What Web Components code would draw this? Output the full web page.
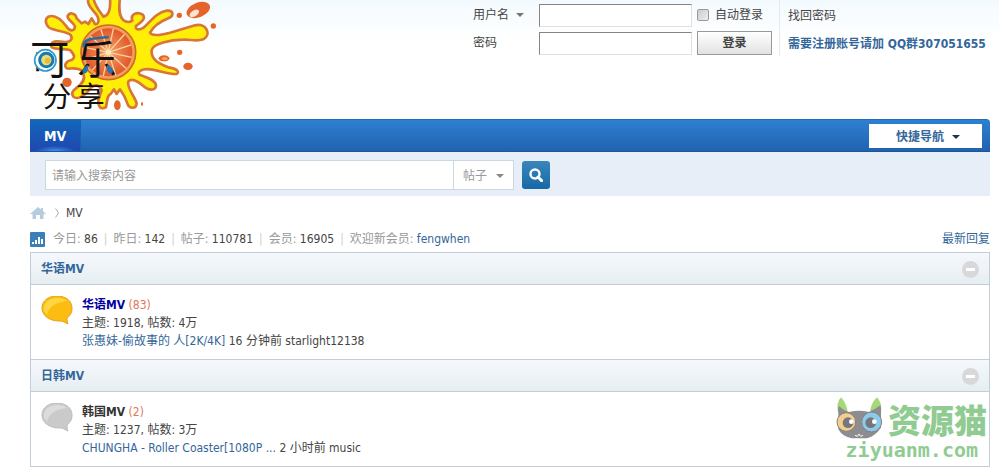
<!DOCTYPE html>
<html lang="zh-CN">
<head>
<meta charset="utf-8">
<title>MV</title>
<style>
	body {
		margin: 0;
		padding: 0 9px 0 30px;
		background: linear-gradient(#f3fafe, #fff 40px) no-repeat #fff;
		color: #444;
		font: 12px/18px "DejaVu Sans Condensed", "Noto Sans CJK SC", sans-serif;
	}
</style>
</head>
<body>
<forum-page>
	<forum-header slot="header"></forum-header>
	<forum-nav slot="header" label="MV"></forum-nav>
	<forum-search slot="header"></forum-search>
	<forum-crumbs>MV</forum-crumbs>
	<forum-stats></forum-stats>
	<forum-list>
		<forum-category name="华语MV">
			<forum-item name="华语MV" today="83" threads="1918" posts="4万" fresh>
				<a slot="last" href="#">张惠妹-偷故事的 人[2K/4K]</a>
				<span slot="when">16 分钟前 starlight12138</span>
			</forum-item>
		</forum-category>
		<forum-category name="日韩MV">
			<forum-item name="韩国MV" today="2" threads="1237" posts="3万">
				<a slot="last" href="#">CHUNGHA - Roller Coaster[1080P ...</a>
				<span slot="when">2 小时前 music</span>
			</forum-item>
		</forum-category>
	</forum-list>
	<site-mark slot="mark"></site-mark>
</forum-page>

<script>
class ForumElement extends HTMLElement {
	constructor() {
		super();
		this.attachShadow({ mode: "open" });
		this.shadowRoot.innerHTML = this.render();
	}

	render() {
		return "<slot></slot>";
	}
}

class ForumPage extends ForumElement {
	render() {
		return `
			<style>
				:host { display: block; position: relative; }
				main { display: block; }
				::slotted(site-mark) { position: absolute; right: 3px; bottom: 8px; }
			</style>
			<header><slot name="header"></slot></header>
			<main><slot></slot></main>
			<slot name="mark"></slot>
		`;
	}
}

class ForumLogo extends ForumElement {
	render() {
		let cuts = "";
		for (let i = 0; i < 12; i++) {
			cuts += `<path d="M0 0V-72" transform="rotate(${i * 30 + 12})"/>`;
		}
		return `
			<style>
				:host { display: block; }
				svg { display: block; width: 200px; height: 119px; }
				text { font-family: "Noto Sans CJK SC", sans-serif; fill: #111; }
			</style>
			<svg viewBox="30 0 600 357" role="img" aria-label="可乐分享">
				<defs>
					<radialGradient id="pulp">
						<stop offset="0" stop-color="#f6a467"/>
						<stop offset="1" stop-color="#e2562a"/>
					</radialGradient>
				</defs>
				<path fill="#ffee05" stroke="#d87538" stroke-width="8" stroke-linejoin="round" d="M300-8C296 25 296 50 312 62Q325 70 337 62C330 42 352 34 368 44C380 58 360 68 348 78C345 92 360 90 372 82C395 60 410 38 440 32C462 30 462 48 445 55C420 65 400 80 390 98C395 108 420 106 450 98L525 76C560 68 575 105 550 118C530 125 510 118 490 119C450 120 400 130 395 150C392 180 420 192 445 202C470 205 480 215 470 222C445 223 420 212 390 208C365 205 350 215 360 225C380 232 405 240 408 255C408 272 390 272 375 262C355 245 335 232 325 245C320 265 345 290 350 310C348 330 325 325 322 310C315 290 305 275 300 268L290 282L282 268L272 282C262 285 262 300 258 322C240 330 235 320 235 300L245 270C235 250 220 255 210 265C195 290 170 300 160 290C150 275 165 268 180 255C195 240 195 225 185 212C170 200 150 208 140 205C130 195 140 182 155 180C165 175 165 165 150 150C130 145 105 150 95 142C90 128 100 122 120 125C150 130 160 120 152 105C140 95 120 95 100 88C80 85 70 60 85 50C105 42 125 60 140 80C150 95 163 95 165 80C160 65 140 60 143 48C150 35 168 40 170 55L185 70L195 65L205 72L215 55L225 72C235 75 240 60 230 45C215 25 200 15 205-8L220-8C222 15 240 35 250 50C268 48 272 20 270-8Z"/>
				<g fill="#e5642c">
					<ellipse cx="535" cy="30" rx="37" ry="22" transform="rotate(-22 535 30)"/>
					<circle cx="478" cy="46" r="8"/>
					<circle cx="580" cy="78" r="8"/>
					<circle cx="479" cy="157" r="8"/>
					<ellipse cx="432" cy="175" rx="16" ry="9"/>
					<ellipse cx="504" cy="199" rx="14" ry="11"/>
					<circle cx="141" cy="247" r="14"/>
					<ellipse cx="292" cy="316" rx="10" ry="15"/>
					<ellipse cx="366" cy="312" rx="3" ry="6"/>
				</g>
				<ellipse cx="523" cy="40" rx="16" ry="9" fill="#fbe3d2" transform="rotate(-35 523 40)"/>
				<ellipse cx="434" cy="176" rx="9" ry="4" fill="#f7a94f"/>
				<circle cx="265" cy="157" r="82" fill="#f0a05a" stroke="#cf6a25" stroke-width="5"/>
				<circle cx="265" cy="157" r="72" fill="url(#pulp)"/>
				<g transform="translate(265 157)" stroke="#f9d6a2" stroke-width="4">${cuts}</g>
				<circle cx="265" cy="157" r="8" fill="#fbe7b8"/>
				<g font-size="118">
					<text x="30" y="222">可</text>
					<text x="172" y="222">乐</text>
				</g>
				<g font-size="86">
					<text x="68" y="321">分</text>
					<text x="168" y="321">享</text>
				</g>
				<g fill="none">
					<circle cx="76" cy="181" r="32" fill="#fff" stroke="#2e9ccc" stroke-width="5"/>
					<circle cx="79" cy="180" r="20" fill="#e3e27a" stroke="#1979b2" stroke-width="9"/>
					<circle cx="83" cy="182" r="9" fill="#e9b83d"/>
				</g>
				<path d="M191 142C190 120 200 116 266 111" fill="none" stroke="#286c9e" stroke-width="8"/>
				<path d="M204 194C190 203 183 212 190 220C203 222 205 210 204 194ZM262 194C278 203 282 212 276 220C262 222 258 210 262 194Z" fill="#2176b3"/>
			</svg>
		`;
	}
}

class LoginForm extends ForumElement {
	render() {
		return `
			<style>
				:host { display: block; }
				form {
					display: grid;
					grid-template-columns: 61px 153px 75px;
					grid-template-rows: 24px 24px;
					gap: 4px 5px;
					align-items: center;
					padding-top: 3px;
				}
				.kind { display: flex; align-items: center; gap: 6px; }
				.kind::after {
					content: "";
					border: 4px solid transparent;
					border-top-color: #777;
					border-bottom: 0;
				}
				select {
					appearance: none;
					border: 0;
					padding: 0;
					background: none;
					font: inherit;
					color: inherit;
				}
				input[type=text], input[type=password] {
					box-sizing: border-box;
					width: 100%;
					height: 23px;
					margin: 0;
					border: 1px solid;
					border-color: #848484 #e0e0e0 #e0e0e0 #848484;
					background: #fff;
				}
				.auto { display: flex; align-items: center; gap: 6px; white-space: nowrap; }
				input[type=checkbox] {
					appearance: none;
					box-sizing: border-box;
					width: 12px;
					height: 12px;
					margin: 0;
					border: 1px solid #999;
					border-radius: 2px;
					background: linear-gradient(135deg, #ccc, #eee);
				}
				button {
					height: 24px;
					padding: 0;
					border: 1px solid #999;
					background: linear-gradient(#fff, #e2e2e2);
					font: inherit;
					font-weight: bold;
					color: #444;
				}
			</style>
			<form>
				<span class="kind"><select aria-label="登录方式"><option>用户名</option></select></span>
				<input type="text" aria-label="用户名">
				<label class="auto"><input type="checkbox">自动登录</label>
				<label for="pw">密码</label>
				<input type="password" id="pw">
				<button type="button">登录</button>
			</form>
		`;
	}
}

class ForumHeader extends ForumElement {
	render() {
		return `
			<style>
				:host { display: flex; align-items: flex-start; height: 119px; }
				login-form { margin-left: auto; }
				nav {
					display: grid;
					grid-template-rows: 24px 24px;
					gap: 4px;
					align-items: center;
					box-sizing: border-box;
					width: 211px;
					margin-left: 7px;
					padding: 4px 0 0 8px;
					border-left: 1px solid #e4eaf0;
					white-space: nowrap;
				}
				a { color: #444; text-decoration: none; }
				a.join { color: #369; font-weight: bold; }
			</style>
			<forum-logo></forum-logo>
			<login-form></login-form>
			<nav>
				<a href="#">找回密码</a>
				<a href="#" class="join">需要注册账号请加 QQ群307051655</a>
			</nav>
		`;
	}
}

class ForumNav extends ForumElement {
	render() {
		return `
			<style>
				:host {
					display: flex;
					justify-content: space-between;
					align-items: center;
					box-sizing: border-box;
					height: 33px;
					padding-right: 8px;
					border-top: 1px solid #226db0;
					border-bottom: 1px solid #1d5596;
					border-radius: 0 4px 0 0;
					background: linear-gradient(#2e80d2, #2062b0);
				}
				a {
					align-self: stretch;
					padding: 0 14px;
					border-right: 1px solid #1c5fae;
					background:
						radial-gradient(ellipse 20px 5px at 50% 100%, #3d92e8, transparent),
						linear-gradient(#1267bb, #2047b0);
					font-size: 14px;
					font-weight: bold;
					line-height: 32px;
					color: #fff;
					text-decoration: none;
				}
				button {
					display: flex;
					justify-content: center;
					align-items: center;
					gap: 8px;
					width: 113px;
					height: 24px;
					padding: 2px 0 0 5px;
					border: 0;
					background: #fff;
					font: inherit;
					font-weight: bold;
					color: #369;
				}
				button::after {
					content: "";
					border: 4px solid transparent;
					border-top-color: #234;
					border-bottom: 0;
				}
			</style>
			<a href="#"></a>
			<button type="button">快捷导航</button>
		`;
	}

	connectedCallback() {
		this.shadowRoot.querySelector("a").textContent = this.getAttribute("label");
	}
}

class ForumSearch extends ForumElement {
	render() {
		return `
			<style>
				:host { display: block; padding: 8px 15px 6px; background: #e8eef7; }
				form { display: flex; align-items: center; height: 30px; }
				input {
					flex: 0 1 409px;
					min-width: 0;
					box-sizing: border-box;
					height: 30px;
					padding: 2px 6px 0;
					border: 1px solid #ccd7e2;
					background: #fff;
					font: inherit;
				}
				input::placeholder { color: #999; opacity: 1; }
				.kind {
					display: flex;
					align-items: center;
					justify-content: center;
					gap: 8px;
					box-sizing: border-box;
					width: 60px;
					height: 30px;
					padding-top: 2px;
					border: 1px solid #ccd7e2;
					border-left: 0;
					background: #fff;
				}
				.kind::after {
					content: "";
					border: 4px solid transparent;
					border-top-color: #888;
					border-bottom: 0;
				}
				select {
					appearance: none;
					padding: 0;
					border: 0;
					background: none;
					font: inherit;
					color: #999;
				}
				button {
					display: grid;
					place-items: center;
					width: 28px;
					height: 28px;
					margin-left: 8px;
					padding: 0;
					border: 0;
					border-radius: 3px;
					background: linear-gradient(#3a86bc, #1669a6);
				}
			</style>
			<form>
				<input type="text" placeholder="请输入搜索内容" aria-label="搜索">
				<span class="kind"><select aria-label="搜索类型"><option>帖子</option></select></span>
				<button type="button" aria-label="搜索">
					<svg width="14" height="14" viewBox="0 0 14 14" fill="none" stroke="#fff">
						<circle cx="6" cy="6" r="4.5" stroke-width="2.4"/>
						<path d="M9 9l3.600 3.600" stroke-width="3" stroke-linecap="round"/>
					</svg>
				</button>
			</form>
		`;
	}
}

class ForumCrumbs extends ForumElement {
	render() {
		return `
			<style>
				:host { display: flex; align-items: center; height: 34px; color: #444; }
				a { display: flex; }
				.sep { margin: 0 7px 0 9px; }
			</style>
			<a href="#" aria-label="首页">
				<svg width="16" height="14" viewBox="0 0 16 14" fill="#b7cbdf">
					<path d="M8 1L0 8h2.500v5H6V9h4v4h3.500V8H16l-3-3V2h-2v1.500z"/>
				</svg>
			</a>
			<svg class="sep" width="4" height="10" viewBox="0 0 4 10" fill="none" stroke="#aaa">
				<path d="M.5.5L3.500 5L.5 9.500"/>
			</svg>
			<slot></slot>
		`;
	}
}

class ForumStats extends ForumElement {
	render() {
		return `
			<style>
				:host { display: flex; align-items: center; height: 18px; padding-bottom: 4px; color: #999; }
				svg { margin-right: 8px; }
				em { font-style: normal; color: #444; }
				i { margin: 0 6px; font-style: normal; color: #ccc; }
				a { color: #369; text-decoration: none; }
				.latest { margin-left: auto; }
			</style>
			<svg width="15" height="15" viewBox="0 0 15 15">
				<rect width="15" height="15" rx="1" fill="#3b7fb8"/>
				<path d="M2 10h2v2H2zM5 8h2v4H5zM8 5h2v7H8zM11 7h2v5h-2z" fill="#fff"/>
			</svg>
			<span>今日: <em>86</em></span><i>|</i>
			<span>昨日: <em>142</em></span><i>|</i>
			<span>帖子: <em>110781</em></span><i>|</i>
			<span>会员: <em>16905</em></span><i>|</i>
			<span>欢迎新会员: <a href="#">fengwhen</a></span>
			<a href="#" class="latest">最新回复</a>
		`;
	}
}

class ForumList extends ForumElement {
	render() {
		return `
			<style>
				:host { display: block; border: 1px solid #c2cdd8; border-top: 0; }
			</style>
			<slot></slot>
		`;
	}
}

class ForumCategory extends ForumElement {
	render() {
		return `
			<style>
				:host { display: block; }
				header {
					display: flex;
					justify-content: space-between;
					align-items: center;
					height: 31px;
					padding: 0 10px;
					border: solid #c2cdd8;
					border-width: 1px 0;
					background: linear-gradient(#f5f8fc, #e6eef2);
				}
				h2 { margin: 0; font-size: 12px; }
				a { color: #369; text-decoration: none; }
				button { display: flex; padding: 2px 0 0; border: 0; background: none; }
			</style>
			<header>
				<h2><a href="#"></a></h2>
				<button type="button" aria-label="收起">
					<svg width="17" height="17" viewBox="0 0 17 17">
						<circle cx="8.500" cy="8.500" r="8.500" fill="#d8d8da"/>
						<path d="M4 7h9v3H4z" fill="#fff"/>
					</svg>
				</button>
			</header>
			<slot></slot>
		`;
	}

	connectedCallback() {
		this.shadowRoot.querySelector("a").textContent = this.getAttribute("name");
	}
}

class ForumItem extends ForumElement {
	render() {
		return `
			<style>
				:host {
					--bubble: #cacaca;
					--bubble-light: #dcdcdc;
					--bubble-edge: #bdbdbd;
					display: flex;
					gap: 9px;
					padding: 11px 10px 9px;
					background: #fff;
				}
				:host([fresh]) {
					--bubble: #fdbc12;
					--bubble-light: #ffd640;
					--bubble-edge: #e3a216;
				}
				h3 { display: inline; margin: 0; font-size: 12px; }
				h3 a { color: #333; text-decoration: none; }
				:host([fresh]) h3 a { color: #0000a0; }
				em { font-style: normal; color: #e0785a; }
				::slotted(a) { color: #369; text-decoration: none; }
			</style>
			<svg width="32" height="31" viewBox="0 0 32 31">
				<path d="M16 0C7 0 1 5 1 12C1 20 9 25 18 25C20 25 22 25 23 26L27 28C26 26 26 24 26 22C30 19 31 16 31 12C31 5 25 0 16 0Z" fill="var(--bubble)" stroke="var(--bubble-edge)"/>
				<path d="M3 15C2 7 8 2 16 2C20 2 24 3 26 5C17 6 8 9 6 19Z" fill="var(--bubble-light)"/>
			</svg>
			<div>
				<div><h3><a href="#"></a></h3> <em></em></div>
				<div class="count"></div>
				<div><slot name="last"></slot> <slot name="when"></slot></div>
			</div>
		`;
	}

	connectedCallback() {
		const root = this.shadowRoot;
		root.querySelector("h3 a").textContent = this.getAttribute("name");
		root.querySelector("em").textContent = `(${this.getAttribute("today")})`;
		root.querySelector(".count").textContent =
			`主题: ${this.getAttribute("threads")}, 帖数: ${this.getAttribute("posts")}`;
	}
}

class SiteMark extends ForumElement {
	render() {
		return `
			<style>
				:host { display: block; color: #90cc92; pointer-events: none; }
				.top { display: flex; align-items: center; gap: 3px; }
				.name { font: 900 33px/40px "Noto Sans CJK SC", sans-serif; }
				.url { padding-right: 9px; font: bold 20px/18px "DejaVu Sans Mono", monospace; text-align: right; }
			</style>
			<div class="top">
				<svg width="50" height="45" viewBox="40 120 150 135">
					<path d="M49 168Q43 140 58 124Q72 138 78 166ZM145 164Q152 136 166 124Q182 140 178 170Z" fill="#a5d878"/>
					<path d="M50 172Q48 156 52 150Q66 164 82 168Q112 160 142 168Q160 160 176 148Q180 160 178 172V215Q160 240 136 247H90Q62 242 50 220Z" fill="#8d8d90"/>
					<circle cx="74" cy="198" r="28" fill="#f3ce8d" stroke="#858085" stroke-width="3"/>
					<circle cx="150" cy="198" r="30" fill="#8bcbe9" stroke="#858085" stroke-width="3"/>
					<circle cx="79" cy="200" r="16" fill="#76767c"/>
					<circle cx="147" cy="200" r="16" fill="#76767c"/>
					<circle cx="89" cy="197" r="7" fill="#fff"/>
					<circle cx="158" cy="197" r="7" fill="#fff"/>
					<path d="M100 238L107 241L112 234L117 241L124 238" fill="none" stroke="#fff" stroke-width="3"/>
				</svg>
				<span class="name">资源猫</span>
			</div>
			<div class="url">ziyuanm.com</div>
		`;
	}
}

customElements.define("forum-logo", ForumLogo);
customElements.define("login-form", LoginForm);
customElements.define("forum-header", ForumHeader);
customElements.define("forum-nav", ForumNav);
customElements.define("forum-search", ForumSearch);
customElements.define("forum-crumbs", ForumCrumbs);
customElements.define("forum-stats", ForumStats);
customElements.define("forum-item", ForumItem);
customElements.define("forum-category", ForumCategory);
customElements.define("forum-list", ForumList);
customElements.define("site-mark", SiteMark);
customElements.define("forum-page", ForumPage);
</script>
</body>
</html>
